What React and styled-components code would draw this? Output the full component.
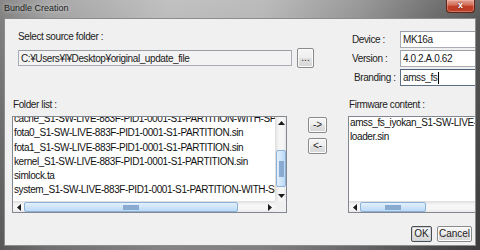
import styled, { createGlobalStyle } from 'styled-components';

const GlobalStyle = createGlobalStyle`
  html, body {
    margin: 0;
    padding: 0;
  }
  body {
    width: 480px;
    height: 250px;
    overflow: hidden;
    background: #5c5c5c;
  }
  * {
    box-sizing: border-box;
  }
`;

const folderItems = [
  'cache_S1-SW-LIVE-883F-PID1-0001-S1-PARTITION-WITH-SPARE.sin',
  'fota0_S1-SW-LIVE-883F-PID1-0001-S1-PARTITION.sin',
  'fota1_S1-SW-LIVE-883F-PID1-0001-S1-PARTITION.sin',
  'kernel_S1-SW-LIVE-883F-PID1-0001-S1-PARTITION.sin',
  'simlock.ta',
  'system_S1-SW-LIVE-883F-PID1-0001-S1-PARTITION-WITH-SPARE.sin',
];

const firmwareItems = [
  'amss_fs_iyokan_S1-SW-LIVE-883F-PID1-0001-S1-PARTITION.sin',
  'loader.sin',
];

const Arrow = ({ dir }) => {
  const pts = {
    up: '0,4 3.5,0 7,4',
    down: '0,0 3.5,4 7,0',
    left: '4,0 0,3.5 4,7',
    right: '0,0 4,3.5 0,7',
  }[dir];
  const vertical = dir === 'up' || dir === 'down';
  return (
    <svg width={vertical ? 7 : 4} height={vertical ? 4 : 7} viewBox={vertical ? '0 0 7 4' : '0 0 4 7'}>
      <polygon points={pts} fill="#1a1a1a" />
    </svg>
  );
};

export default function App() {
  return (
    <>
      <GlobalStyle />
      <Window>
        <TitleBar>
          <Title>Bundle Creation</Title>
          <CloseButton>x</CloseButton>
        </TitleBar>
        <Client>
          <TopRow>
            <SourceGroup>
              <Label>Select source folder :</Label>
              <SourceRow>
                <Field $readOnly $width={274}>
                  C:¥Users¥l¥Desktop¥original_update_file
                </Field>
                <Button $w={17} $h={20}>...</Button>
              </SourceRow>
            </SourceGroup>
            <InfoForm>
              <FormLabel>Device :</FormLabel>
              <Field $width={110}>MK16a</Field>
              <FormLabel>Version :</FormLabel>
              <Field $width={110}>4.0.2.A.0.62</Field>
              <FormLabel $indent={2}>Branding :</FormLabel>
              <Field $width={110} $focused>
                amss_fs
                <Caret />
              </Field>
            </InfoForm>
          </TopRow>

          <ListsRow>
            <ListColumn $width={275}>
              <ListLabel>Folder list :</ListLabel>
              <ListBox $withVScroll>
                <ListContent>
                  <Items $offset={-5}>
                    {folderItems.map((item) => (
                      <Item key={item}>{item}</Item>
                    ))}
                  </Items>
                </ListContent>
                <VScroll>
                  <ScrollBtn>
                    <Arrow dir="up" />
                  </ScrollBtn>
                  <VTrack>
                    <VThumb $top={22} $size={37}>
                      <Grip $vertical />
                    </VThumb>
                  </VTrack>
                  <ScrollBtn>
                    <Arrow dir="down" />
                  </ScrollBtn>
                </VScroll>
                <HScroll>
                  <ScrollBtn>
                    <Arrow dir="left" />
                  </ScrollBtn>
                  <HTrack>
                    <HThumb $left={0} $size={214}>
                      <Grip />
                    </HThumb>
                  </HTrack>
                  <ScrollBtn>
                    <Arrow dir="right" />
                  </ScrollBtn>
                </HScroll>
                <Corner />
              </ListBox>
            </ListColumn>

            <ArrowColumn>
              <Button $w={19} $h={16}>-&gt;</Button>
              <Button $w={19} $h={16}>&lt;-</Button>
            </ArrowColumn>

            <ListColumn $width={150} $gap={21}>
              <ListLabel>Firmware content :</ListLabel>
              <ListBox>
                <ListContent>
                  <Items $offset={-1}>
                    {firmwareItems.map((item) => (
                      <Item key={item}>{item}</Item>
                    ))}
                  </Items>
                </ListContent>
                <HScroll>
                  <ScrollBtn>
                    <Arrow dir="left" />
                  </ScrollBtn>
                  <HTrack>
                    <HThumb $left={0} $size={66}>
                      <Grip />
                    </HThumb>
                  </HTrack>
                  <ScrollBtn>
                    <Arrow dir="right" />
                  </ScrollBtn>
                </HScroll>
              </ListBox>
            </ListColumn>
          </ListsRow>

          <Footer>
            <Button $w={21} $h={16} $default>OK</Button>
            <Button $w={35} $h={16}>Cancel</Button>
          </Footer>
        </Client>
      </Window>
    </>
  );
}

const Window = styled.div`
  width: 480px;
  height: 250px;
  display: flex;
  flex-direction: column;
  padding: 0 4px 4px;
  background:
    linear-gradient(to bottom, rgba(255, 255, 255, 0.08) 0%, rgba(0, 0, 0, 0) 10%, rgba(0, 0, 0, 0.3) 100%),
    linear-gradient(90deg, #7e7e7e 0%, #a0a0a0 10%, #bcbcbc 35%, #b6b6b6 55%, #929292 75%, #666666 92%, #555555 100%);
  font-family: 'Liberation Sans', Arial, sans-serif;
`;

const TitleBar = styled.div`
  height: 18px;
  display: flex;
  justify-content: space-between;
  align-items: flex-start;
  flex-shrink: 0;
`;

const Title = styled.div`
  font-size: 9px;
  line-height: 16px;
  color: #1e1e1e;
  text-shadow: 0 0 5px rgba(255, 255, 255, 0.7);
`;

const CloseButton = styled.div`
  width: 29px;
  height: 13px;
  margin-right: 1px;
  border: 1px solid #5e2418;
  border-top: none;
  border-radius: 0 0 4px 4px;
  background: linear-gradient(to bottom, #e3a596 0%, #d2705c 40%, #c13d25 55%, #b9412b 100%);
  box-shadow: inset 0 0 0 1px rgba(255, 210, 200, 0.35);
  color: #fff;
  font-size: 9px;
  font-weight: bold;
  line-height: 11px;
  text-align: center;
  text-shadow: 0 0 2px #5a1a10;
`;

const Client = styled.div`
  flex: 1;
  display: flex;
  flex-direction: column;
  padding: 11px 0 0 7px;
  background: #f0f0f0;
  border: 1px solid #8c8c8c;
  overflow: hidden;
  font-size: 10px;
  letter-spacing: -0.4px;
  color: #1a1a1a;
`;

const TopRow = styled.div`
  display: flex;
  align-items: flex-start;
  flex-shrink: 0;
`;

const SourceGroup = styled.div`
  display: flex;
  flex-direction: column;
  gap: 4px;
  margin-left: 6px;
  width: 296px;
  flex-shrink: 0;
`;

const Label = styled.div`
  line-height: 14px;
  color: #222;
`;

const SourceRow = styled.div`
  display: flex;
  align-items: center;
  gap: 5px;
`;

const Field = styled.div`
  width: ${({ $width }) => $width}px;
  height: ${({ $readOnly }) => ($readOnly ? 16 : 17)}px;
  flex-shrink: 0;
  display: flex;
  align-items: center;
  padding-left: 2px;
  white-space: nowrap;
  overflow: hidden;
  background: ${({ $readOnly }) => ($readOnly ? '#f3f3f3' : '#ffffff')};
  border: 1px solid ${({ $focused }) => ($focused ? '#5d6f85' : '#a9adb3')};
  border-top-color: ${({ $focused }) => ($focused ? '#4f6078' : '#9a9ea5')};
  color: #1a1a1a;
`;

const Caret = styled.span`
  display: inline-block;
  width: 1px;
  height: 12px;
  margin-left: 1px;
  background: #000;
`;

const InfoForm = styled.div`
  display: grid;
  grid-template-columns: 48px 110px;
  grid-auto-rows: 17px;
  row-gap: 2px;
  align-items: center;
  margin: 1px 0 0 38px;
  flex-shrink: 0;
`;

const FormLabel = styled.div`
  padding-left: ${({ $indent }) => $indent || 0}px;
  line-height: 14px;
  color: #222;
`;

const ListsRow = styled.div`
  display: flex;
  align-items: flex-start;
  margin-top: 12px;
  flex-shrink: 0;
`;

const ListColumn = styled.div`
  display: flex;
  flex-direction: column;
  gap: 4px;
  width: ${({ $width }) => $width}px;
  margin-left: ${({ $gap }) => $gap || 0}px;
  flex-shrink: 0;
`;

const ListLabel = styled.div`
  line-height: 14px;
  padding-left: 1px;
  color: #222;
`;

const ListBox = styled.div`
  height: 97px;
  display: grid;
  grid-template-columns: ${({ $withVScroll }) => ($withVScroll ? '1fr 11px' : '1fr')};
  grid-template-rows: 1fr 11px;
  background: #fff;
  border: 1px solid #828790;
`;

const ListContent = styled.div`
  overflow: hidden;
  min-width: 0;
`;

const Items = styled.div`
  margin-top: ${({ $offset }) => $offset}px;
  padding-left: 1px;
`;

const Item = styled.div`
  height: 14.3px;
  line-height: 14.3px;
  white-space: nowrap;
  color: #111;
`;

const VScroll = styled.div`
  display: flex;
  flex-direction: column;
  background: linear-gradient(90deg, #e6e6e6, #f6f6f6 30%, #f6f6f6 70%, #e9e9e9);
  border-left: 1px solid #e0e0e0;
`;

const HScroll = styled.div`
  display: flex;
  background: linear-gradient(to bottom, #e6e6e6, #f6f6f6 30%, #f6f6f6 70%, #e9e9e9);
  border-top: 1px solid #e0e0e0;
`;

const ScrollBtn = styled.div`
  width: 11px;
  height: 11px;
  flex-shrink: 0;
  display: flex;
  align-items: center;
  justify-content: center;
`;

const VTrack = styled.div`
  flex: 1;
`;

const HTrack = styled.div`
  flex: 1;
  display: flex;
`;

const VThumb = styled.div`
  margin-top: ${({ $top }) => $top}px;
  height: ${({ $size }) => $size}px;
  display: flex;
  align-items: center;
  justify-content: center;
  background: linear-gradient(90deg, #e3f0fc, #cfe5f9 50%, #bcdaf6);
  border: 1px solid #8cb1d8;
  border-radius: 2px;
`;

const HThumb = styled.div`
  margin-left: ${({ $left }) => $left}px;
  width: ${({ $size }) => $size}px;
  display: flex;
  align-items: center;
  justify-content: center;
  background: linear-gradient(to bottom, #e3f0fc, #cfe5f9 50%, #bcdaf6);
  border: 1px solid #8cb1d8;
  border-radius: 2px;
`;

const Grip = styled.div`
  width: ${({ $vertical }) => ($vertical ? 5 : 16)}px;
  height: ${({ $vertical }) => ($vertical ? 16 : 5)}px;
  background: radial-gradient(circle, #87a9cf 0.7px, transparent 0.9px) 0 0 / 2px 2px;
`;

const Corner = styled.div`
  background: #f0f0f0;
`;

const ArrowColumn = styled.div`
  display: flex;
  flex-direction: column;
  gap: 5px;
  margin-left: 21px;
  padding-top: 19px;
  flex-shrink: 0;
`;

const Button = styled.div`
  width: ${({ $w }) => $w}px;
  height: ${({ $h }) => $h}px;
  flex-shrink: 0;
  display: flex;
  align-items: center;
  justify-content: center;
  border: 1px solid ${({ $default }) => ($default ? '#4f4f4f' : '#8a8a8a')};
  border-radius: 2px;
  background: linear-gradient(to bottom, #f6f6f6 0%, #eeeeee 48%, #e2e2e2 52%, #d6d6d6 100%);
  box-shadow: inset 0 0 0 1px ${({ $default }) => ($default ? '#c9d3dc' : '#fbfbfb')};
  color: #222;
  letter-spacing: 0;
  line-height: 1;
`;

const Footer = styled.div`
  display: flex;
  justify-content: flex-end;
  gap: 5px;
  margin-top: 13px;
  padding-right: 3px;
`;
